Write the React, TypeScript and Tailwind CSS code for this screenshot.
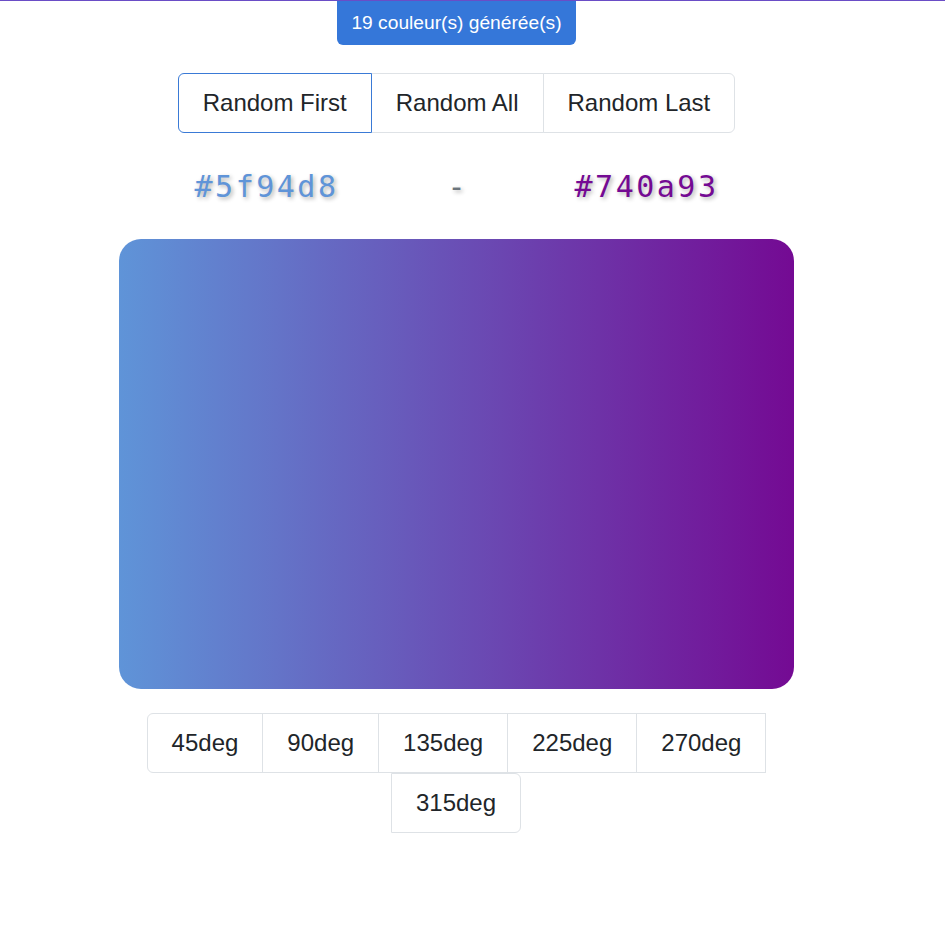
import React from "react";

const randomButtons = ["Random First", "Random All", "Random Last"];
const angles = ["45deg", "90deg", "135deg", "225deg", "270deg", "315deg"];

const App = () => {
  const first = "#5f94d8";
  const last = "#740a93";

  return (
    <div className="min-h-screen bg-white font-['Liberation_Sans',Arial,sans-serif] text-[#212529]">
      <div className="h-px bg-[#6a4dc6]" />

      <div className="flex w-[913px] flex-col items-center">
        <div className="rounded-b-md bg-[#3577d9] px-[14px] py-2 text-[19.2px] leading-[28px] text-white">
          19 couleur(s) générée(s)
        </div>

        <div className="mt-[28px] flex">
          {randomButtons.map((label, i) => (
            <button
              key={label}
              className={
                i === 0
                  ? "relative z-10 rounded-l-md border border-[#3a7ad6] bg-white px-6 py-[11px] text-[24px] leading-[36px]"
                  : i === randomButtons.length - 1
                  ? "-ml-px rounded-r-md border border-[#dee2e6] bg-white px-6 py-[11px] text-[24px] leading-[36px]"
                  : "-ml-px border border-[#dee2e6] bg-white px-6 py-[11px] text-[24px] leading-[36px]"
              }
            >
              {label}
            </button>
          ))}
        </div>

        <div className="grid h-[106px] w-[570px] grid-cols-3 items-center text-center font-['DejaVu_Sans_Mono',monospace] text-[30px] [text-shadow:2px_2px_4px_rgba(0,0,0,0.3)]">
          <span className="tracking-[2.5px] text-[#5f94d8]">{first}</span>
          <span className="text-[#6c757d]">-</span>
          <span className="tracking-[2.5px] text-[#740a93]">{last}</span>
        </div>

        <div className="h-[450px] w-[675px] rounded-[22px] bg-[linear-gradient(90deg,#5f94d8,#740a93)]" />

        <div className="mt-[24px] flex w-[675px] flex-wrap justify-center">
          {angles.map((deg, i) => (
            <button
              key={deg}
              className={
                i === 0
                  ? "rounded-l-md border border-[#dee2e6] bg-white px-6 py-[11px] text-[24px] leading-[36px]"
                  : i === angles.length - 1
                  ? "-ml-px rounded-r-md border border-[#dee2e6] bg-white px-6 py-[11px] text-[24px] leading-[36px]"
                  : "-ml-px border border-[#dee2e6] bg-white px-6 py-[11px] text-[24px] leading-[36px]"
              }
            >
              {deg}
            </button>
          ))}
        </div>
      </div>
    </div>
  );
};

export default App;
